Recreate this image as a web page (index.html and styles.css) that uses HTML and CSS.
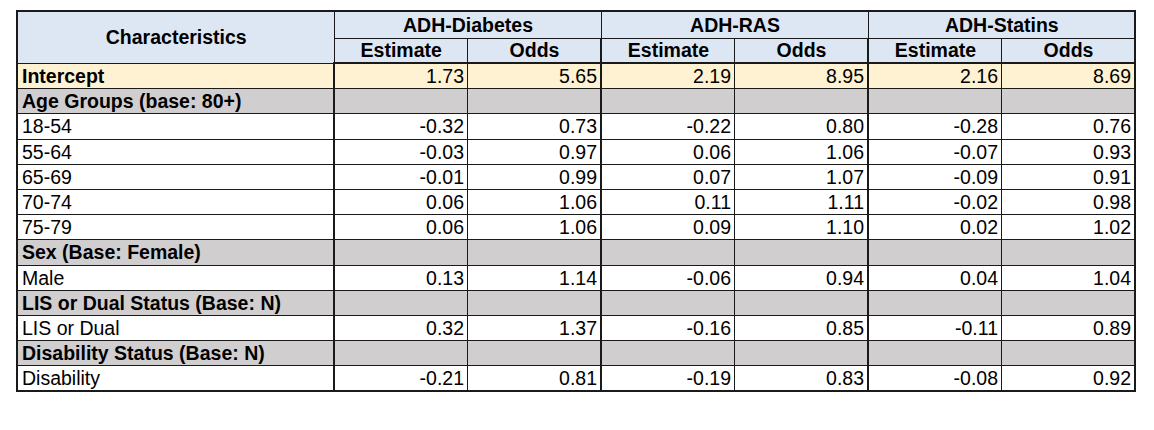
FILE: index.html
```html
<!DOCTYPE html>
<html>
<head>
<meta charset="utf-8">
<link rel="stylesheet" href="styles.css">
</head>
<body>
<table class="grid">
  <colgroup>
    <col class="c-char">
    <col class="c-num"><col class="c-num">
    <col class="c-num"><col class="c-num">
    <col class="c-num"><col class="c-num">
  </colgroup>
  <thead>
    <tr class="h1">
      <th rowspan="2" class="char-h">Characteristics</th>
      <th colspan="2" class="grp">ADH-Diabetes</th>
      <th colspan="2" class="grp">ADH-RAS</th>
      <th colspan="2" class="grp">ADH-Statins</th>
    </tr>
    <tr class="h2">
      <th>Estimate</th><th class="gr">Odds</th>
      <th>Estimate</th><th class="gr">Odds</th>
      <th>Estimate</th><th class="gr">Odds</th>
    </tr>
  </thead>
  <tbody>
    <tr class="intercept"><td class="lbl b">Intercept</td><td>1.73</td><td class="gr">5.65</td><td>2.19</td><td class="gr">8.95</td><td>2.16</td><td class="gr">8.69</td></tr>
    <tr class="sec"><td class="lbl b">Age Groups (base: 80+)</td><td></td><td class="gr"></td><td></td><td class="gr"></td><td></td><td class="gr"></td></tr>
    <tr><td class="lbl">18-54</td><td>-0.32</td><td class="gr">0.73</td><td>-0.22</td><td class="gr">0.80</td><td>-0.28</td><td class="gr">0.76</td></tr>
    <tr><td class="lbl">55-64</td><td>-0.03</td><td class="gr">0.97</td><td>0.06</td><td class="gr">1.06</td><td>-0.07</td><td class="gr">0.93</td></tr>
    <tr><td class="lbl">65-69</td><td>-0.01</td><td class="gr">0.99</td><td>0.07</td><td class="gr">1.07</td><td>-0.09</td><td class="gr">0.91</td></tr>
    <tr><td class="lbl">70-74</td><td>0.06</td><td class="gr">1.06</td><td>0.11</td><td class="gr">1.11</td><td>-0.02</td><td class="gr">0.98</td></tr>
    <tr><td class="lbl">75-79</td><td>0.06</td><td class="gr">1.06</td><td>0.09</td><td class="gr">1.10</td><td>0.02</td><td class="gr">1.02</td></tr>
    <tr class="sec"><td class="lbl b">Sex (Base: Female)</td><td></td><td class="gr"></td><td></td><td class="gr"></td><td></td><td class="gr"></td></tr>
    <tr><td class="lbl">Male</td><td>0.13</td><td class="gr">1.14</td><td>-0.06</td><td class="gr">0.94</td><td>0.04</td><td class="gr">1.04</td></tr>
    <tr class="sec"><td class="lbl b">LIS or Dual Status (Base: N)</td><td></td><td class="gr"></td><td></td><td class="gr"></td><td></td><td class="gr"></td></tr>
    <tr><td class="lbl">LIS or Dual</td><td>0.32</td><td class="gr">1.37</td><td>-0.16</td><td class="gr">0.85</td><td>-0.11</td><td class="gr">0.89</td></tr>
    <tr class="sec"><td class="lbl b">Disability Status (Base: N)</td><td></td><td class="gr"></td><td></td><td class="gr"></td><td></td><td class="gr"></td></tr>
    <tr><td class="lbl">Disability</td><td>-0.21</td><td class="gr">0.81</td><td>-0.19</td><td class="gr">0.83</td><td>-0.08</td><td class="gr">0.92</td></tr>
  </tbody>
</table>
</body>
</html>
```
FILE: styles.css
```css
html, body {
  margin: 0;
  padding: 0;
  background: #ffffff;
}
body {
  padding: 10px 0 0 16px;
  font-family: "Liberation Sans", Arial, sans-serif;
  color: #000;
}
.grid {
  border-collapse: collapse;
  table-layout: fixed;
  width: 1118px;
  font-size: 19.5px;
  line-height: 21px;
  border: 2px solid #1a1a1a;
}
.c-char { width: 317px; }
.c-num { width: 133.5px; }
.grid th, .grid td {
  border: 1px solid #1a1a1a;
  padding: 0 3px 0 4px;
  white-space: nowrap;
  overflow: hidden;
}
.grid th {
  background: #dde7f4;
  font-weight: bold;
  text-align: center;
}
.h1 th { height: 25px; padding-top: 1px; }
.h2 th { height: 23px; border-bottom: 2px solid #1a1a1a; }
.char-h { border-right: 2px solid #1a1a1a; }
.grp { border-left: 2px solid #1a1a1a; border-right: 2px solid #1a1a1a; }
.grid td {
  height: 23.2px;
  text-align: right;
  padding-top: 1px;
  padding-bottom: 0;
}
.grid td.lbl {
  text-align: left;
  border-right: 2px solid #1a1a1a;
}
.grid .gr { border-right: 2px solid #1a1a1a; }
.b { font-weight: bold; }
.intercept td { background: #fef2d2; }
.sec td { background: #d0cecf; }
```
